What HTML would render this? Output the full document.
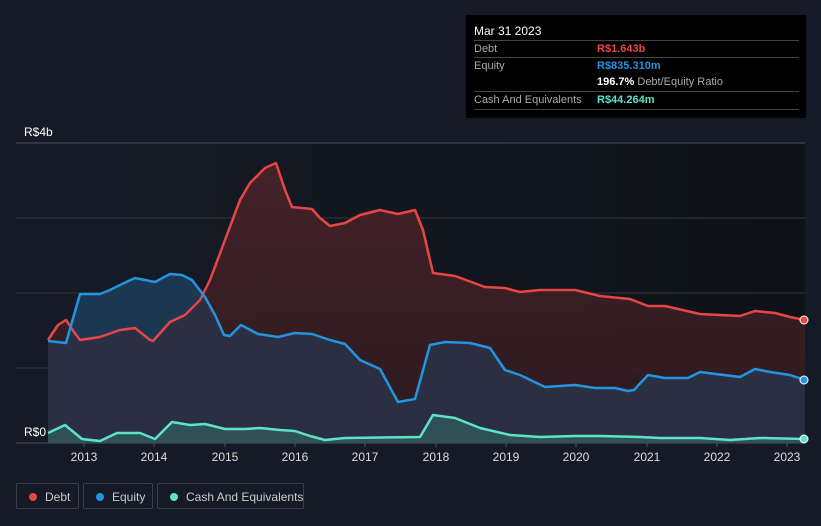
<!DOCTYPE html>
<html><head><meta charset="utf-8">
<style>
body{margin:0;width:821px;height:526px;background:#151b26;font-family:"Liberation Sans",sans-serif;overflow:hidden;position:relative}
.tt{position:absolute;left:466px;top:15px;width:340px;height:103px;background:#000;color:#fff;font-size:11px}
.tt .h{position:absolute;left:8px;top:9px;font-size:12px}
.row{position:absolute;left:8px;width:325px;border-top:1px solid #444;height:17px;line-height:17px;white-space:nowrap}
.row .l{color:#aaa;position:absolute;left:0}
.row .v{position:absolute;left:123px;font-weight:bold}
.leg{position:absolute;top:483px;height:26px;border:1px solid #3a404a;border-radius:2px;color:#ccc;font-size:12px;line-height:26px;box-sizing:border-box;white-space:nowrap}
.leg i{position:absolute;left:12px;top:9px;width:8px;height:8px;border-radius:50%}
.leg span{position:absolute;left:28px;white-space:nowrap}
</style></head><body>
<svg width="821" height="526" style="position:absolute;left:0;top:0">
<defs>
<linearGradient id="bg" x1="0" x2="1"><stop offset="0" stop-color="#151b26"/><stop offset="1" stop-color="#0e1117"/></linearGradient>
<linearGradient id="dg" x1="0" y1="0" x2="0" y2="1"><stop offset="0" stop-color="#4a2329"/><stop offset="1" stop-color="#2e1a20"/></linearGradient>
</defs>
<rect x="48" y="143" width="757" height="300" fill="url(#bg)"/>
<g stroke="#30353e" stroke-width="1">
<line x1="16" y1="143" x2="805" y2="143" stroke="#4a4f58"/><line x1="16" y1="218" x2="805" y2="218"/><line x1="16" y1="293" x2="805" y2="293"/><line x1="16" y1="368" x2="805" y2="368"/><line x1="16" y1="443" x2="805" y2="443" stroke="#4a4f58"/>
</g>
<path fill="url(#dg)" opacity="0.9" d="M48,340 L58,325 L66,320 L74,332 L80,340 L100,337 L120,330 L135,328 L150,340 L153,341 L170,322 L185,315 L200,300 L210,280 L225,240 L240,200 L250,183 L265,168 L276,163 L285,190 L292,207 L312,209 L320,218 L330,226 L345,223 L360,215 L380,210 L398,214 L415,210 L423,230 L433,273 L455,276 L485,287 L505,288 L520,292 L540,290 L575,290 L600,296 L630,299 L648,306 L665,306 L700,314 L720,315 L740,316 L755,311 L775,313 L790,317 L805,320 L805,443 L48,443Z"/>
<path fill="#2a3348" opacity="0.85" d="M48,341 L66,343 L80,294 L100,294 L110,290 L120,285 L135,278 L155,282 L170,274 L182,275 L192,280 L205,297 L215,315 L224,335 L230,336 L241,325 L258,334 L278,337 L295,333 L312,334 L330,340 L345,344 L360,360 L380,369 L398,402 L415,399 L430,345 L445,342 L470,343 L490,348 L505,370 L520,375 L545,387 L575,385 L595,388 L615,388 L628,391 L634,390 L648,375 L665,378 L688,378 L700,372 L740,377 L755,369 L770,372 L790,375 L805,380 L805,443 L48,443Z"/>
<path fill="#1a3a55" opacity="0.8" d="M66,343 L80,294 L100,294 L110,290 L120,285 L135,278 L155,282 L170,274 L182,275 L192,280 L205,297 L203,300 L185,315 L170,322 L153,341 L150,340 L135,328 L120,330 L100,337 L80,340 L74,332Z"/>
<path fill="#2f5a5a" opacity="0.8" d="M48,433 L65,425 L82,439 L100,441 L117,433 L140,433 L155,439 L172,422 L190,425 L205,424 L225,429 L245,429 L260,428 L280,430 L295,431 L310,436 L325,440 L345,438 L420,437 L433,415 L455,418 L480,428 L510,435 L540,437 L575,436 L600,436 L640,437 L660,438 L700,438 L730,440 L760,438 L805,439 L805,443 L48,443Z"/>
<g fill="none" stroke-width="2.5" stroke-linejoin="round">
<path stroke="#e84545" d="M48,340 L58,325 L66,320 L74,332 L80,340 L100,337 L120,330 L135,328 L150,340 L153,341 L170,322 L185,315 L200,300 L210,280 L225,240 L240,200 L250,183 L265,168 L276,163 L285,190 L292,207 L312,209 L320,218 L330,226 L345,223 L360,215 L380,210 L398,214 L415,210 L423,230 L433,273 L455,276 L485,287 L505,288 L520,292 L540,290 L575,290 L600,296 L630,299 L648,306 L665,306 L700,314 L720,315 L740,316 L755,311 L775,313 L790,317 L805,320"/>
<path stroke="#2394df" d="M48,341 L66,343 L80,294 L100,294 L110,290 L120,285 L135,278 L155,282 L170,274 L182,275 L192,280 L205,297 L215,315 L224,335 L230,336 L241,325 L258,334 L278,337 L295,333 L312,334 L330,340 L345,344 L360,360 L380,369 L398,402 L415,399 L430,345 L445,342 L470,343 L490,348 L505,370 L520,375 L545,387 L575,385 L595,388 L615,388 L628,391 L634,390 L648,375 L665,378 L688,378 L700,372 L740,377 L755,369 L770,372 L790,375 L805,380"/>
<path stroke="#5ee2c9" d="M48,433 L65,425 L82,439 L100,441 L117,433 L140,433 L155,439 L172,422 L190,425 L205,424 L225,429 L245,429 L260,428 L280,430 L295,431 L310,436 L325,440 L345,438 L420,437 L433,415 L455,418 L480,428 L510,435 L540,437 L575,436 L600,436 L640,437 L660,438 L700,438 L730,440 L760,438 L805,439"/>
</g>
<circle cx="804" cy="320" r="4" fill="#e84545" stroke="#fff" stroke-width="1"/>
<circle cx="804" cy="380" r="4" fill="#2394df" stroke="#fff" stroke-width="1"/>
<circle cx="804" cy="439" r="4" fill="#5ee2c9" stroke="#fff" stroke-width="1"/>
<g stroke="#4a4f58"><line x1="84" y1="443" x2="84" y2="447"/><line x1="154" y1="443" x2="154" y2="447"/><line x1="225" y1="443" x2="225" y2="447"/><line x1="295" y1="443" x2="295" y2="447"/><line x1="365" y1="443" x2="365" y2="447"/><line x1="436" y1="443" x2="436" y2="447"/><line x1="506" y1="443" x2="506" y2="447"/><line x1="576" y1="443" x2="576" y2="447"/><line x1="647" y1="443" x2="647" y2="447"/><line x1="717" y1="443" x2="717" y2="447"/><line x1="787" y1="443" x2="787" y2="447"/></g>
<g fill="#fff" font-size="12" font-family="Liberation Sans,sans-serif">
<text x="24" y="136">R$4b</text><text x="24" y="436">R$0</text>
<g text-anchor="middle" fill="#ddd">
<text x="84" y="461">2013</text><text x="154" y="461">2014</text><text x="225" y="461">2015</text><text x="295" y="461">2016</text><text x="365" y="461">2017</text><text x="436" y="461">2018</text><text x="506" y="461">2019</text><text x="576" y="461">2020</text><text x="647" y="461">2021</text><text x="717" y="461">2022</text><text x="787" y="461">2023</text>
</g></g>
</svg>
<div class="tt">
<div class="h">Mar 31 2023</div>
<div class="row" style="top:25px"><span class="l">Debt</span><span class="v" style="color:#e84545">R$1.643b</span></div>
<div class="row" style="top:42px"><span class="l">Equity</span><span class="v" style="color:#2394df">R$835.310m</span></div>
<div class="row" style="top:59px;border-top:none"><span class="v" style="color:#fff">196.7% <span style="color:#aaa;font-weight:normal;position:static">Debt/Equity Ratio</span></span></div>
<div class="row" style="top:76px"><span class="l">Cash And Equivalents</span><span class="v" style="color:#5ee2c9">R$44.264m</span></div>
<div class="row" style="top:94px;height:0"></div>
</div>
<div class="leg" style="left:16px;width:63px"><i style="background:#e84545"></i><span>Debt</span></div>
<div class="leg" style="left:83px;width:70px"><i style="background:#2394df"></i><span>Equity</span></div>
<div class="leg" style="left:157px;width:147px"><i style="background:#5ee2c9"></i><span>Cash And Equivalents</span></div>
</body></html>
